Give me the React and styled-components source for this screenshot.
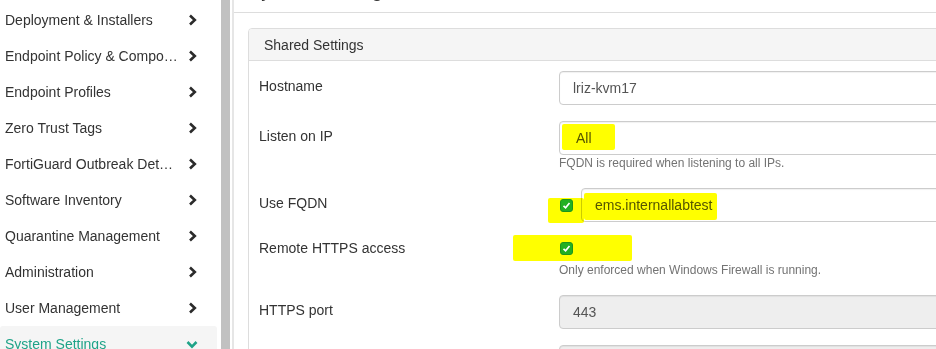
import React from 'react';
import styled, { createGlobalStyle } from 'styled-components';

const GlobalStyle = createGlobalStyle`
  html, body {
    margin: 0;
    padding: 0;
    background: #fff;
    overflow: hidden;
  }
  body {
    font-family: "Liberation Sans", Arial, sans-serif;
    font-size: 14px;
    color: #333;
  }
  * {
    box-sizing: border-box;
  }
`;

const Page = styled.div`
  position: relative;
  display: flex;
  width: 936px;
  height: 349px;
  overflow: hidden;
`;

const Sidebar = styled.aside`
  display: flex;
  flex: 0 0 232px;
  height: 100%;
`;

const NavList = styled.ul`
  list-style: none;
  margin: 2px 0 0;
  padding: 0;
  width: 217px;
`;

const NavItem = styled.li`
  display: flex;
  align-items: center;
  height: 36px;
  padding: 0 19px 0 5px;
  background: ${(p) => (p.$active ? '#f5f5f5' : 'transparent')};
  color: ${(p) => (p.$active ? '#1fa388' : '#333')};
  border-radius: ${(p) => (p.$active ? '3px 3px 0 0' : '0')};
`;

const NavText = styled.span`
  flex: 1;
  min-width: 0;
  white-space: nowrap;
  overflow: hidden;
  text-overflow: ellipsis;
  margin-right: 6px;
`;

const ChevronBox = styled.span`
  display: flex;
  align-items: center;
  justify-content: center;
  width: 12px;
  height: 14px;
`;

const ScrollTrack = styled.div`
  width: 15px;
  padding: 0 2px 0 4px;
`;

const ScrollThumb = styled.div`
  width: 9px;
  height: 100%;
  background: #c1c1c1;
`;

const Main = styled.main`
  flex: 1;
  min-width: 0;
  border-left: 2px solid #e6e6e6;
  overflow: hidden;
`;

const TitleBar = styled.div`
  height: 13px;
  border-bottom: 1px solid #ddd;
  overflow: hidden;
  padding-left: 14px;
`;

const Title = styled.h2`
  margin: -20px 0 0;
  font-size: 20px;
  font-weight: normal;
  line-height: 20px;
  color: #333;
`;

const Content = styled.div`
  padding: 15px 0 0 14px;
  width: 900px;
`;

const Panel = styled.section`
  border: 1px solid #ddd;
  border-radius: 4px;
  background: #fff;
`;

const PanelHeading = styled.div`
  height: 32px;
  padding: 0 15px;
  display: flex;
  align-items: center;
  background: #f5f5f5;
  border-bottom: 1px solid #ddd;
  border-radius: 3px 3px 0 0;
  font-size: 14px;
  color: #333;
`;

const PanelBody = styled.div`
  padding: 10px 0 0 10px;
`;

const FormGroup = styled.div`
  display: grid;
  grid-template-columns: 300px 1fr;
  margin-bottom: 16px;
`;

const Label = styled.label`
  padding-top: ${(p) => (p.$check ? '0' : '5px')};
  line-height: 20px;
  font-size: 14px;
  color: #333;
`;

const Control = styled.div`
  display: flex;
  flex-direction: column;
`;

const InlineRow = styled.div`
  display: flex;
  align-items: center;
  gap: 8px;
  height: ${(p) => (p.$short ? '20px' : '34px')};
`;

const Input = styled.div`
  flex: 1 1 auto;
  min-width: 0;
  height: 34px;
  min-height: 34px;
  display: flex;
  align-items: center;
  padding: 0 ${(p) => (p.$pad || 13)}px;
  border: 1px solid #ccc;
  border-radius: 4px;
  background: ${(p) => (p.$disabled ? '#eee' : '#fff')};
  box-shadow: inset 0 1px 1px rgba(0, 0, 0, 0.06);
  font-size: 14px;
  color: #555;
`;

const Help = styled.div`
  margin-top: ${(p) => (p.$gap || 0)}px;
  line-height: 17px;
  font-size: 12px;
  color: #737373;
`;

const CheckBox = styled.span`
  position: relative;
  z-index: 2;
  flex: 0 0 13px;
  width: 13px;
  height: 13px;
  margin-left: 1px;
  border-radius: 3px;
  background: #22b022;
  border: 1px solid #1c961c;
  display: flex;
  align-items: center;
  justify-content: center;
`;

const Marker = styled.div`
  position: absolute;
  z-index: 1;
  left: ${(p) => p.$x}px;
  top: ${(p) => p.$y}px;
  width: ${(p) => p.$w}px;
  height: ${(p) => p.$h}px;
  background: #ffff00;
  mix-blend-mode: multiply;
  border-radius: 2px;
  pointer-events: none;
`;

function ChevronRight() {
  return (
    <svg width="9" height="12" viewBox="0 0 9 12">
      <path d="M2 1.5 L6.8 6 L2 10.5" fill="none" stroke="#2b2b2b" strokeWidth="2.6" />
    </svg>
  );
}

function ChevronDown() {
  return (
    <svg width="12" height="9" viewBox="0 0 12 9">
      <path d="M1.5 2 L6 6.6 L10.5 2" fill="none" stroke="#1fa388" strokeWidth="2.6" />
    </svg>
  );
}

function Tick() {
  return (
    <svg width="9" height="9" viewBox="0 0 9 9">
      <path d="M1.5 4.8 L3.6 6.8 L7.5 2" fill="none" stroke="#fff" strokeWidth="1.7" />
    </svg>
  );
}

const navItems = [
  'Deployment & Installers',
  'Endpoint Policy & Components',
  'Endpoint Profiles',
  'Zero Trust Tags',
  'FortiGuard Outbreak Detection',
  'Software Inventory',
  'Quarantine Management',
  'Administration',
  'User Management',
  'System Settings',
];

export default function App() {
  return (
    <>
      <GlobalStyle />
      <Page>
        <Sidebar>
          <NavList>
            {navItems.map((item) => {
              const active = item === 'System Settings';
              return (
                <NavItem key={item} $active={active}>
                  <NavText>{item}</NavText>
                  <ChevronBox>{active ? <ChevronDown /> : <ChevronRight />}</ChevronBox>
                </NavItem>
              );
            })}
          </NavList>
          <ScrollTrack>
            <ScrollThumb />
          </ScrollTrack>
        </Sidebar>

        <Main>
          <TitleBar>
            <Title>System Settings</Title>
          </TitleBar>
          <Content>
            <Panel>
              <PanelHeading>Shared Settings</PanelHeading>
              <PanelBody>
                <FormGroup>
                  <Label>Hostname</Label>
                  <Control>
                    <Input>lriz-kvm17</Input>
                  </Control>
                </FormGroup>

                <FormGroup>
                  <Label>Listen on IP</Label>
                  <Control>
                    <Input $pad={16}>All</Input>
                    <Help>FQDN is required when listening to all IPs.</Help>
                  </Control>
                </FormGroup>

                <FormGroup>
                  <Label>Use FQDN</Label>
                  <Control>
                    <InlineRow>
                      <CheckBox><Tick /></CheckBox>
                      <Input>ems.internallabtest</Input>
                    </InlineRow>
                  </Control>
                </FormGroup>

                <FormGroup>
                  <Label $check>Remote HTTPS access</Label>
                  <Control>
                    <InlineRow $short>
                      <CheckBox><Tick /></CheckBox>
                    </InlineRow>
                    <Help $gap={4}>Only enforced when Windows Firewall is running.</Help>
                  </Control>
                </FormGroup>

                <FormGroup>
                  <Label>HTTPS port</Label>
                  <Control>
                    <Input $disabled>443</Input>
                  </Control>
                </FormGroup>

                <FormGroup>
                  <Label />
                  <Control>
                    <Input $disabled />
                  </Control>
                </FormGroup>
              </PanelBody>
            </Panel>
          </Content>
        </Main>

        <Marker $x={562} $y={124} $w={53} $h={26} />
        <Marker $x={548} $y={198} $w={36} $h={25} />
        <Marker $x={584} $y={193} $w={133} $h={27} />
        <Marker $x={513} $y={235} $w={119} $h={26} />
      </Page>
    </>
  );
}
